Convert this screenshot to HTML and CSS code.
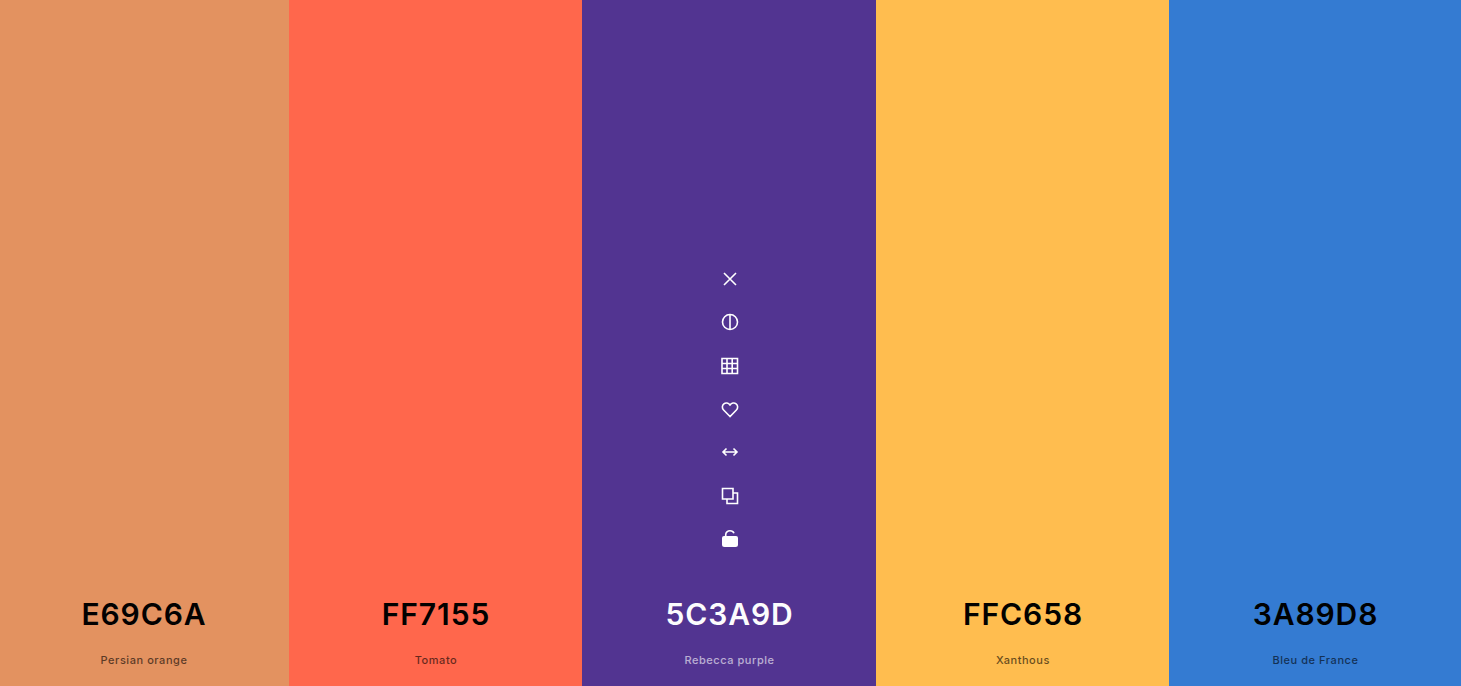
FILE: index.html
```html
<!DOCTYPE html>
<html lang="en">

<head>
    <meta charset="UTF-8">
    <title>Palette</title>
    <link rel="stylesheet" href="styles.css">
</head>

<body>
    <div class="palette">
        <div class="swatch swatch-orange">
            <div class="hex">E69C6A</div>
            <div class="name">Persian orange</div>
        </div>
        <div class="swatch swatch-tomato">
            <div class="hex">FF7155</div>
            <div class="name">Tomato</div>
        </div>
        <div class="swatch swatch-purple">
            <div class="tools">
                <svg class="icon" viewBox="0 0 18 18"><path d="M3 3l12 12M15 3L3 15"/></svg>
                <svg class="icon" viewBox="0 0 18 18"><circle cx="9" cy="9" r="7.500"/><path d="M9 1.500v15"/></svg>
                <svg class="icon" viewBox="0 0 18 18"><path d="M1 1.500h15.500v15h-15.500zM1 6.500h15.500M1 11.500h15.500M6 1.500v15M11.200 1.500v15"/></svg>
                <svg class="icon" viewBox="0 0 18 18"><path d="M9 16.500L2.600 10C.8 8.100 1 5.300 2.900 3.800 4.700 2.400 7.400 2.800 9 5c1.600-2.200 4.300-2.600 6.100-1.200 1.900 1.500 2.100 4.300.3 6.200z"/></svg>
                <svg class="icon" viewBox="0 0 18 18"><path d="M2 9h14M5.500 5.500L2 9l3.500 3.500M12.500 5.500L16 9l-3.500 3.500"/></svg>
                <svg class="icon" viewBox="0 0 18 18"><path d="M1.500 1.500h10.500v10.500h-10.500zM12 6h4.500v10.500h-10.500v-4.500"/></svg>
                <svg class="icon" viewBox="0 0 18 18"><path class="solid" d="M3 6h12a2 2 0 0 1 2 2v6.500a2.500 2.500 0 0 1-2.500 2.500h-11a2.500 2.500 0 0 1-2.500-2.500V8a2 2 0 0 1 2-2z"/><path d="M4.700 7V4.800C4.700 2.400 6.600.8 9 .8c1.800 0 3.300.8 4 2.400"/></svg>
            </div>
            <div class="hex">5C3A9D</div>
            <div class="name">Rebecca purple</div>
        </div>
        <div class="swatch swatch-yellow">
            <div class="hex">FFC658</div>
            <div class="name">Xanthous</div>
        </div>
        <div class="swatch swatch-blue">
            <div class="hex">3A89D8</div>
            <div class="name">Bleu de France</div>
        </div>
    </div>
</body>

</html>
```

FILE: styles.css
```css
html,
body {
    height: 100%;
}

body {
    margin: 0;
    overflow: hidden;
    font-family: "Inter", "Liberation Sans", sans-serif;
}

.palette {
    display: grid;
    grid-template-columns: 289px 293px 294px 293px 292px;
    height: 686px;
}

.swatch {
    display: flex;
    flex-direction: column;
    align-items: center;
    justify-content: flex-end;
    padding-left: 2px;
    color: #000;
}

.swatch-orange {
    padding-left: 0;
    background: #e39260;
}

.swatch-tomato {
    background: #ff674c;
}

.swatch-purple {
    background: #523491;
    color: #fff;
}

.swatch-yellow {
    background: #ffbd4f;
}

.swatch-blue {
    background: #347bd2;
}

.tools {
    display: flex;
    flex-direction: column;
    align-items: center;
    gap: 25.33px;
    margin-bottom: 48px;
}

.icon {
    display: block;
    width: 18px;
    height: 18px;
    fill: none;
    stroke: #fff;
    stroke-width: 1.600;
}

.icon .solid {
    fill: #fff;
    stroke: none;
}

.hex {
    padding-right: 1px;
    font-size: 30px;
    line-height: 36px;
    font-weight: 600;
    letter-spacing: 0.9px;
    opacity: 0.99;
}

.name {
    margin-top: 22px;
    margin-bottom: 19px;
    padding-right: 1px;
    font-size: 11px;
    line-height: 13px;
    font-weight: 500;
    letter-spacing: 0.55px;
    opacity: 0.6;
}
```
